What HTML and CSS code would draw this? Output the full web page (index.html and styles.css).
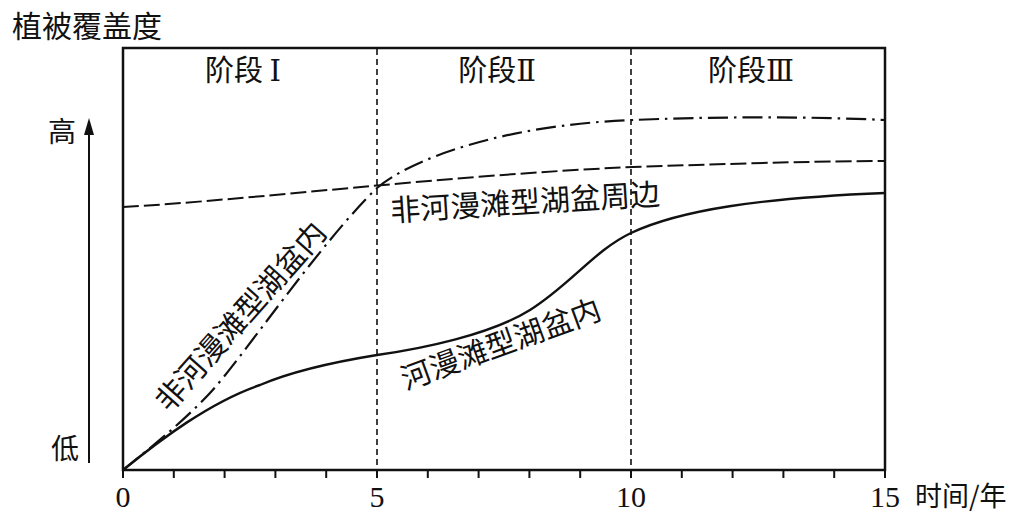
FILE: index.html
```html
<!DOCTYPE html>
<html lang="zh">
<head>
<meta charset="utf-8">
<title>植被覆盖度</title>
<link rel="stylesheet" href="styles.css">
</head>
<body>
<div class="chart">
<svg class="plot" width="1018" height="520" viewBox="0 0 1018 520" xmlns="http://www.w3.org/2000/svg">
  <text class="cjk title" x="12" y="37">植被覆盖度</text>

  <!-- y axis arrow -->
  <line class="yaxis" x1="89" y1="133" x2="89" y2="463"/>
  <polygon class="arrow" points="89,118 84,135 94,135"/>
  <text class="cjk ylab" x="48" y="142">高</text>
  <text class="cjk ylab" x="51" y="459">低</text>

  <!-- phase separators -->
  <line class="phase" x1="377" y1="49" x2="377" y2="470"/>
  <line class="phase" x1="631" y1="49" x2="631" y2="470"/>

  <!-- phase labels -->
  <text class="cjk phaselab" x="243" y="81">阶段 <tspan class="roman">Ⅰ</tspan></text>
  <text class="cjk phaselab" x="497" y="81">阶段<tspan class="roman">Ⅱ</tspan></text>
  <text class="cjk phaselab" x="751" y="81">阶段<tspan class="roman">Ⅲ</tspan></text>

  <!-- curves -->
  <path class="c-dashed" d="M123,207 C250,200 450,175 633,167 C750,163 830,161 885,161"/>
  <path class="c-dashdot" d="M123,470 C145,452 180,425 210,393 C240,361 320,243 377,188 C410,160 500,125 633,120 C700,117 800,116 885,120"/>
  <path class="c-solid" d="M123,470 C160,440 210,402 260,385 C295,370 340,361 377,355 C420,349 490,335 530,310 C570,285 595,250 631,233 C680,210 760,198 885,193"/>

  <!-- frame -->
  <rect class="frame" x="123" y="48" width="762" height="422"/>

  <!-- ticks -->
  <g class="ticks">
    <line x1="123" y1="470" x2="123" y2="478"/>
    <line x1="173.8" y1="470" x2="173.8" y2="478"/>
    <line x1="224.6" y1="470" x2="224.6" y2="478"/>
    <line x1="275.4" y1="470" x2="275.4" y2="478"/>
    <line x1="326.2" y1="470" x2="326.2" y2="478"/>
    <line x1="377" y1="470" x2="377" y2="478"/>
    <line x1="427.8" y1="470" x2="427.8" y2="478"/>
    <line x1="478.6" y1="470" x2="478.6" y2="478"/>
    <line x1="529.4" y1="470" x2="529.4" y2="478"/>
    <line x1="580.2" y1="470" x2="580.2" y2="478"/>
    <line x1="631" y1="470" x2="631" y2="478"/>
    <line x1="681.8" y1="470" x2="681.8" y2="478"/>
    <line x1="732.6" y1="470" x2="732.6" y2="478"/>
    <line x1="783.4" y1="470" x2="783.4" y2="478"/>
    <line x1="834.2" y1="470" x2="834.2" y2="478"/>
    <line x1="885" y1="470" x2="885" y2="478"/>
  </g>

  <!-- x labels -->
  <text class="num" x="123" y="507">0</text>
  <text class="num" x="377" y="507">5</text>
  <text class="num" x="631" y="507">10</text>
  <text class="num" x="885" y="507">15</text>
  <text class="cjk xunit" x="915" y="506">时间/年</text>

  <!-- curve labels -->
  <text class="cjk curvelab" x="239" y="315" transform="rotate(-48.5 239 315)">非河漫滩型湖盆内</text>
  <text class="cjk curvelab" x="525" y="200" transform="rotate(-3.6 525 200)">非河漫滩型湖盆周边</text>
  <text class="cjk curvelab" x="500" y="342" transform="rotate(-20 500 342)">河漫滩型湖盆内</text>
</svg>
</div>
</body>
</html>
```

FILE: styles.css
```css
html, body {
  margin: 0;
  padding: 0;
  background: #ffffff;
}

.chart {
  width: 1018px;
  height: 520px;
  overflow: hidden;
}

.plot {
  display: block;
}

.cjk {
  font-family: "Noto Sans CJK SC", "Noto Sans", sans-serif;
  font-weight: 400;
  fill: #111111;
}

.title {
  font-size: 30px;
}

.ylab {
  font-size: 28px;
}

.phaselab {
  font-size: 29px;
  text-anchor: middle;
}

.roman {
  font-family: "DejaVu Serif", serif;
  font-size: 29px;
}

.num {
  font-family: "Liberation Serif", "Times New Roman", serif;
  font-size: 30px;
  text-anchor: middle;
  fill: #111111;
}

.xunit {
  font-size: 27px;
}

.curvelab {
  font-size: 30px;
  text-anchor: middle;
  dominant-baseline: central;
}

.frame {
  fill: none;
  stroke: #111111;
  stroke-width: 2.5;
}

.yaxis {
  stroke: #111111;
  stroke-width: 2;
}

.arrow {
  fill: #111111;
}

.phase {
  stroke: #111111;
  stroke-width: 1.6;
  stroke-dasharray: 6 4;
}

.ticks line {
  stroke: #111111;
  stroke-width: 2;
}

.c-solid,
.c-dashed,
.c-dashdot {
  fill: none;
  stroke: #111111;
  stroke-width: 2.4;
}

.c-dashed {
  stroke-width: 2;
  stroke-dasharray: 16 5;
}

.c-dashdot {
  stroke-width: 2.2;
  stroke-dasharray: 20 6 2.5 6;
}
```
